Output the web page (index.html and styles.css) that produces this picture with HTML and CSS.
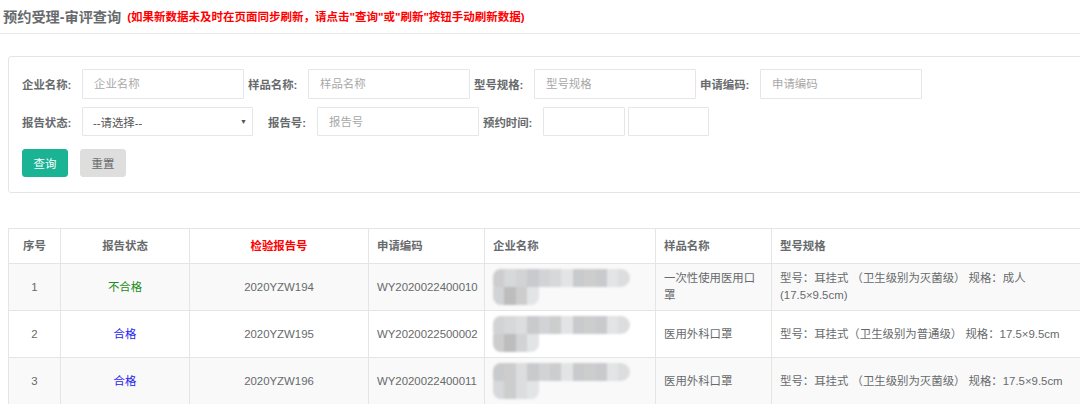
FILE: index.html
```html
<!DOCTYPE html>
<html lang="zh-CN">
<head>
<meta charset="utf-8">
<title>预约受理-审评查询</title>
<link rel="stylesheet" href="styles.css">
</head>
<body>
<div class="page-header">
  <span class="title">预约受理-审评查询</span>
  <span class="note">(如果新数据未及时在页面同步刷新，请点击"查询"或"刷新"按钮手动刷新数据)</span>
</div>
<div class="content">
  <div class="search-panel">
    <div class="form-row">
      <div class="group"><label class="lbl">企业名称:</label><input class="inp" placeholder="企业名称"></div>
      <div class="group"><label class="lbl">样品名称:</label><input class="inp" placeholder="样品名称"></div>
      <div class="group"><label class="lbl">型号规格:</label><input class="inp" placeholder="型号规格"></div>
      <div class="group"><label class="lbl">申请编码:</label><input class="inp" placeholder="申请编码"></div>
    </div>
    <div class="form-row">
      <div class="group"><label class="lbl">报告状态:</label><div class="select"><span>--请选择--</span><span class="arrow">▼</span></div></div>
      <div class="group"><label class="lbl">报告号:</label><input class="inp inp-sm" placeholder="报告号"></div>
      <div class="group"><label class="lbl">预约时间:</label><input class="date"><input class="date date2"></div>
    </div>
    <div class="btn-row">
      <button class="btn btn-primary">查询</button>
      <button class="btn btn-default">重置</button>
    </div>
  </div>

  <table class="grid">
    <colgroup>
      <col class="w-no"><col class="w-status"><col class="w-report"><col class="w-apply"><col class="w-company"><col class="w-sample"><col class="w-spec">
    </colgroup>
    <thead>
      <tr>
        <th class="c">序号</th>
        <th class="c">报告状态</th>
        <th class="c red">检验报告号</th>
        <th>申请编码</th>
        <th>企业名称</th>
        <th>样品名称</th>
        <th>型号规格</th>
      </tr>
    </thead>
    <tbody>
      <tr class="odd">
        <td class="c">1</td>
        <td class="c fail">不合格</td>
        <td class="c">2020YZW194</td>
        <td>WY2020022400010</td>
        <td>
          <div class="mosaic">
            <div class="m-line"><span class="t3"></span><span class="t5"></span><span class="t2"></span><span class="t1"></span><span class="t2"></span><span class="t5"></span><span class="t6"></span><span class="t1"></span><span class="t3"></span><span class="t1"></span><span class="t6"></span><span class="t4"></span></div>
            <div class="m-line"><span class="t2"></span><span class="t7"></span><span class="t3"></span><span class="t6"></span></div>
          </div>
        </td>
        <td>一次性使用医用口罩</td>
        <td>型号：耳挂式 （卫生级别为灭菌级） 规格：成人(17.5×9.5cm)</td>
      </tr>
      <tr>
        <td class="c">2</td>
        <td class="c pass">合格</td>
        <td class="c">2020YZW195</td>
        <td>WY2020022500002</td>
        <td>
          <div class="mosaic">
            <div class="m-line"><span class="t2"></span><span class="t5"></span><span class="t4"></span><span class="t1"></span><span class="t2"></span><span class="t3"></span><span class="t6"></span><span class="t1"></span><span class="t3"></span><span class="t1"></span><span class="t6"></span><span class="t4"></span></div>
            <div class="m-line"><span class="t3"></span><span class="t7"></span><span class="t2"></span><span class="t6"></span></div>
          </div>
        </td>
        <td>医用外科口罩</td>
        <td>型号：耳挂式（卫生级别为普通级） 规格：17.5×9.5cm</td>
      </tr>
      <tr class="odd">
        <td class="c">3</td>
        <td class="c pass">合格</td>
        <td class="c">2020YZW196</td>
        <td>WY2020022400011</td>
        <td>
          <div class="mosaic">
            <div class="m-line"><span class="t1"></span><span class="t3"></span><span class="t4"></span><span class="t1"></span><span class="t2"></span><span class="t3"></span><span class="t6"></span><span class="t1"></span><span class="t3"></span><span class="t1"></span><span class="t6"></span><span class="t4"></span></div>
            <div class="m-line"><span class="t5"></span><span class="t3"></span><span class="t4"></span><span class="t6"></span></div>
          </div>
        </td>
        <td>医用外科口罩</td>
        <td>型号：耳挂式 （卫生级别为灭菌级） 规格：17.5×9.5cm</td>
      </tr>
    </tbody>
  </table>
</div>
</body>
</html>
```

FILE: styles.css
```css
* {
  box-sizing: border-box;
}

html,
body {
  margin: 0;
  overflow: hidden;
}

body {
  width: 1080px;
  height: 404px;
  background: #fff;
  color: #676a6c;
  font-family: "Liberation Sans", "Noto Sans CJK SC", sans-serif;
  font-size: 11.4px;
}

/* ---------- header ---------- */
.page-header {
  height: 34px;
  border-bottom: 1px solid #e7eaec;
  display: flex;
  align-items: center;
  gap: 6px;
  padding: 0 0 2px 3px;
  white-space: nowrap;
}

.title {
  font-size: 14.2px;
  font-weight: bold;
  color: #676a6c;
}

.note {
  color: #ff0000;
  font-weight: bold;
  font-size: 11.5px;
}

/* ---------- search panel ---------- */
.content {
  padding: 22px 0 0 8px;
}

.search-panel {
  width: 1110px;
  border: 1px solid #e3e5e7;
  border-radius: 3px;
  padding: 12px 13px 15px;
}

.form-row {
  display: flex;
  align-items: center;
}

.form-row + .form-row {
  margin-top: 8px;
}

.group {
  display: flex;
  align-items: center;
  margin-right: 4px;
}

.lbl {
  width: 60px;
  padding-right: 11px;
  text-align: right;
  font-weight: bold;
  white-space: nowrap;
  color: #676a6c;
}

.inp,
.date {
  height: 30px;
  width: 162px;
  border: 1px solid #e5e6e7;
  border-radius: 1px;
  padding: 0 11px;
  font: inherit;
  color: #555;
  background: #fff;
  outline: none;
}

.inp::placeholder {
  color: #a8a8a8;
}

.inp-sm {
  height: 29px;
  width: 162px;
}

.date {
  height: 29px;
  width: 82px;
  margin-right: 3px;
}

.date2 {
  width: 81px;
}

.select {
  height: 29px;
  width: 171px;
  border: 1px solid #e5e6e7;
  border-radius: 1px;
  padding: 0 5px 0 10px;
  display: flex;
  align-items: center;
  justify-content: space-between;
  color: #555;
}

.arrow {
  font-size: 7px;
  color: #555;
}

.btn-row {
  display: flex;
  gap: 12px;
  margin-top: 13px;
}

.btn {
  width: 46px;
  height: 28px;
  border-radius: 3px;
  font: inherit;
  padding: 0;
  cursor: pointer;
}

.btn-primary {
  background: #1ab394;
  border: 1px solid #1ab394;
  color: #fff;
}

.btn-default {
  background: #dedede;
  border: 1px solid #dedede;
  color: #676a6c;
}

/* ---------- table ---------- */
.grid {
  margin-top: 35px;
  width: 1078px;
  table-layout: fixed;
  border-collapse: collapse;
  line-height: 17px;
}

.w-no { width: 52px; }
.w-status { width: 129px; }
.w-report { width: 179px; }
.w-apply { width: 116px; }
.w-company { width: 171px; }
.w-sample { width: 116px; }
.w-spec { width: 315px; }

.grid th,
.grid td {
  border: 1px solid #e5e5e5;
  padding: 0 8px;
  text-align: left;
  vertical-align: middle;
}

.grid th {
  height: 35px;
  font-weight: bold;
  background: #fff;
}

.grid td {
  height: 47px;
}

.grid .c {
  text-align: center;
}

.grid tr.odd td {
  background: #f9f9f9;
}

.red {
  color: #ff0000;
}

.fail {
  color: #228b22;
}

.pass {
  color: #2424f0;
}

/* blurred company name */
.mosaic {
  display: flex;
  flex-direction: column;
  width: 137px;
  filter: blur(1.1px);
}

.m-line {
  display: flex;
  height: 18px;
}

.m-line:first-child {
  border-radius: 8px 9px 9px 2px;
  overflow: hidden;
}

.m-line:last-child {
  width: 46px;
  border-radius: 0 0 8px 8px;
  overflow: hidden;
}

.m-line span {
  flex: 0 0 11.4px;
  height: 100%;
}

.t1 { background: #c8cacd; }
.t2 { background: #d2d3d5; }
.t3 { background: #cdcdce; }
.t4 { background: #dcdddf; }
.t5 { background: #d7d8da; }
.t6 { background: #e3e4e5; }
.t7 { background: #bdbdbe; }
```
